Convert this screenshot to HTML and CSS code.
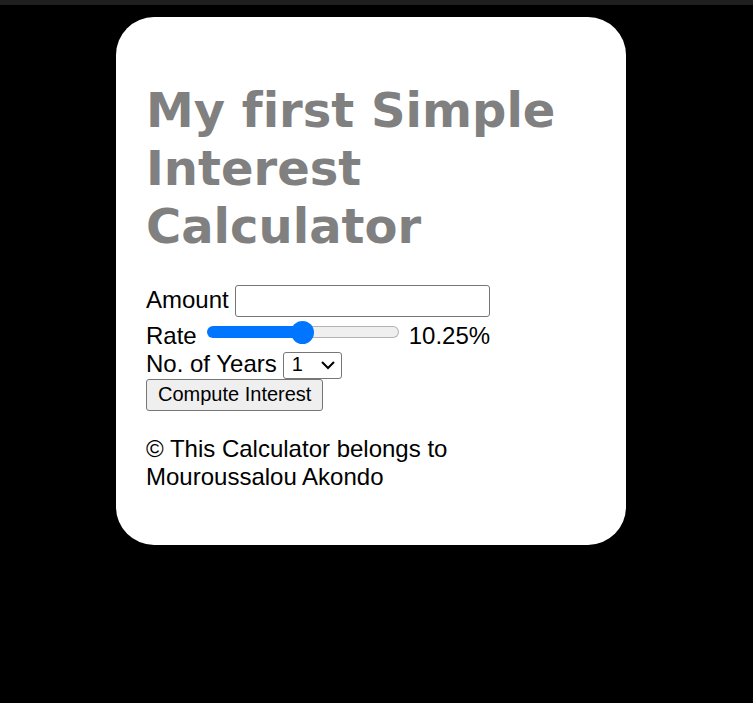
FILE: index.html
```html
<!DOCTYPE html>
<html lang="en">
<head>
<meta charset="utf-8">
<title>Simple Interest Calculator</title>
<link rel="stylesheet" href="styles.css">
</head>
<body>
<main class="card">
  <h1 class="title">My first Simple Interest Calculator</h1>
  <form class="form">
    <div class="row row-amount"><label for="principal">Amount</label><input class="amount" type="number" id="principal"></div>
    <div class="row row-rate"><label for="rate">Rate</label><input class="rate" type="range" id="rate" min="1" max="20" step="0.25" value="10.5"><output for="rate">10.25%</output></div>
    <div class="row row-years"><label for="years">No. of Years</label><span class="select"><select class="years" id="years"><option>1</option><option>2</option><option>3</option><option>4</option><option>5</option></select><svg class="chevron" viewBox="0 0 14 10" aria-hidden="true"><path d="M1 2l6 6 6-6"/></svg></span></div>
    <button class="compute" type="button">Compute Interest</button>
  </form>
  <footer class="footer">© This Calculator belongs to Mouroussalou Akondo</footer>
</main>
</body>
</html>
```
FILE: styles.css
```css
* {
  box-sizing: border-box;
}

body {
  margin: 0;
  padding: 12px 11px 24px 0;
  border-top: 5px solid #1f1f1f;
  min-height: 100vh;
  background: #000;
  color: #000;
  font: 24px/28px "Liberation Sans", Arial, sans-serif;
}

.card {
  max-width: 510px;
  margin: 0 auto;
  padding: 64px 30px 54px;
  border-radius: 38px;
  background: #fff;
}

.title {
  margin: 0 0 30px;
  color: #808080;
  font: bold 48px/58px Verdana, "DejaVu Sans", sans-serif;
  font-variant-ligatures: none;
}

.form {
  display: flex;
  flex-direction: column;
  align-items: flex-start;
}

.row {
  display: flex;
  align-items: center;
  gap: 6px;
}

.row-amount label {
  padding-bottom: 2px;
}

.row-rate {
  height: 35px;
  padding-top: 2px;
  gap: 10px;
}

.row-years label {
  height: 27px;
  line-height: 24px;
}

.amount {
  width: 255px;
  height: 32px;
  border: 1px solid #767676;
  border-radius: 3px;
  background: #fff;
  font: inherit;
}

.rate {
  appearance: none;
  width: 192px;
  height: 24px;
  margin: 0 0 8px;
  background: transparent;
}

.rate::-webkit-slider-runnable-track {
  height: 12px;
  border: 1px solid transparent;
  border-radius: 6px;
  background:
    linear-gradient(90deg, #0075ff 50%, transparent 50%) border-box,
    linear-gradient(#efefef, #efefef) padding-box,
    linear-gradient(#b2b2b2, #b2b2b2) border-box;
}

.rate::-webkit-slider-thumb {
  appearance: none;
  width: 23px;
  height: 23px;
  margin-top: -6px;
  border-radius: 50%;
  background: #0075ff;
}

.select {
  position: relative;
  display: flex;
}

.years {
  appearance: none;
  width: 59px;
  height: 27px;
  padding: 0 8px 2px;
  border: 1px solid #767676;
  border-radius: 3px;
  background: #fff;
  color: #000;
  font: 20px/23px "Liberation Sans", Arial, sans-serif;
}

.chevron {
  position: absolute;
  top: 8px;
  right: 7px;
  width: 14px;
  height: 10px;
  fill: none;
  stroke: #000;
  stroke-width: 2;
  pointer-events: none;
}

.compute {
  height: 32px;
  padding: 0 11px 2px;
  border: 1px solid #767676;
  border-radius: 3px;
  background: #efefef;
  color: #000;
  font: 20px/28px "Liberation Sans", Arial, sans-serif;
}

.footer {
  max-width: 350px;
  margin-top: 24px;
}
```
